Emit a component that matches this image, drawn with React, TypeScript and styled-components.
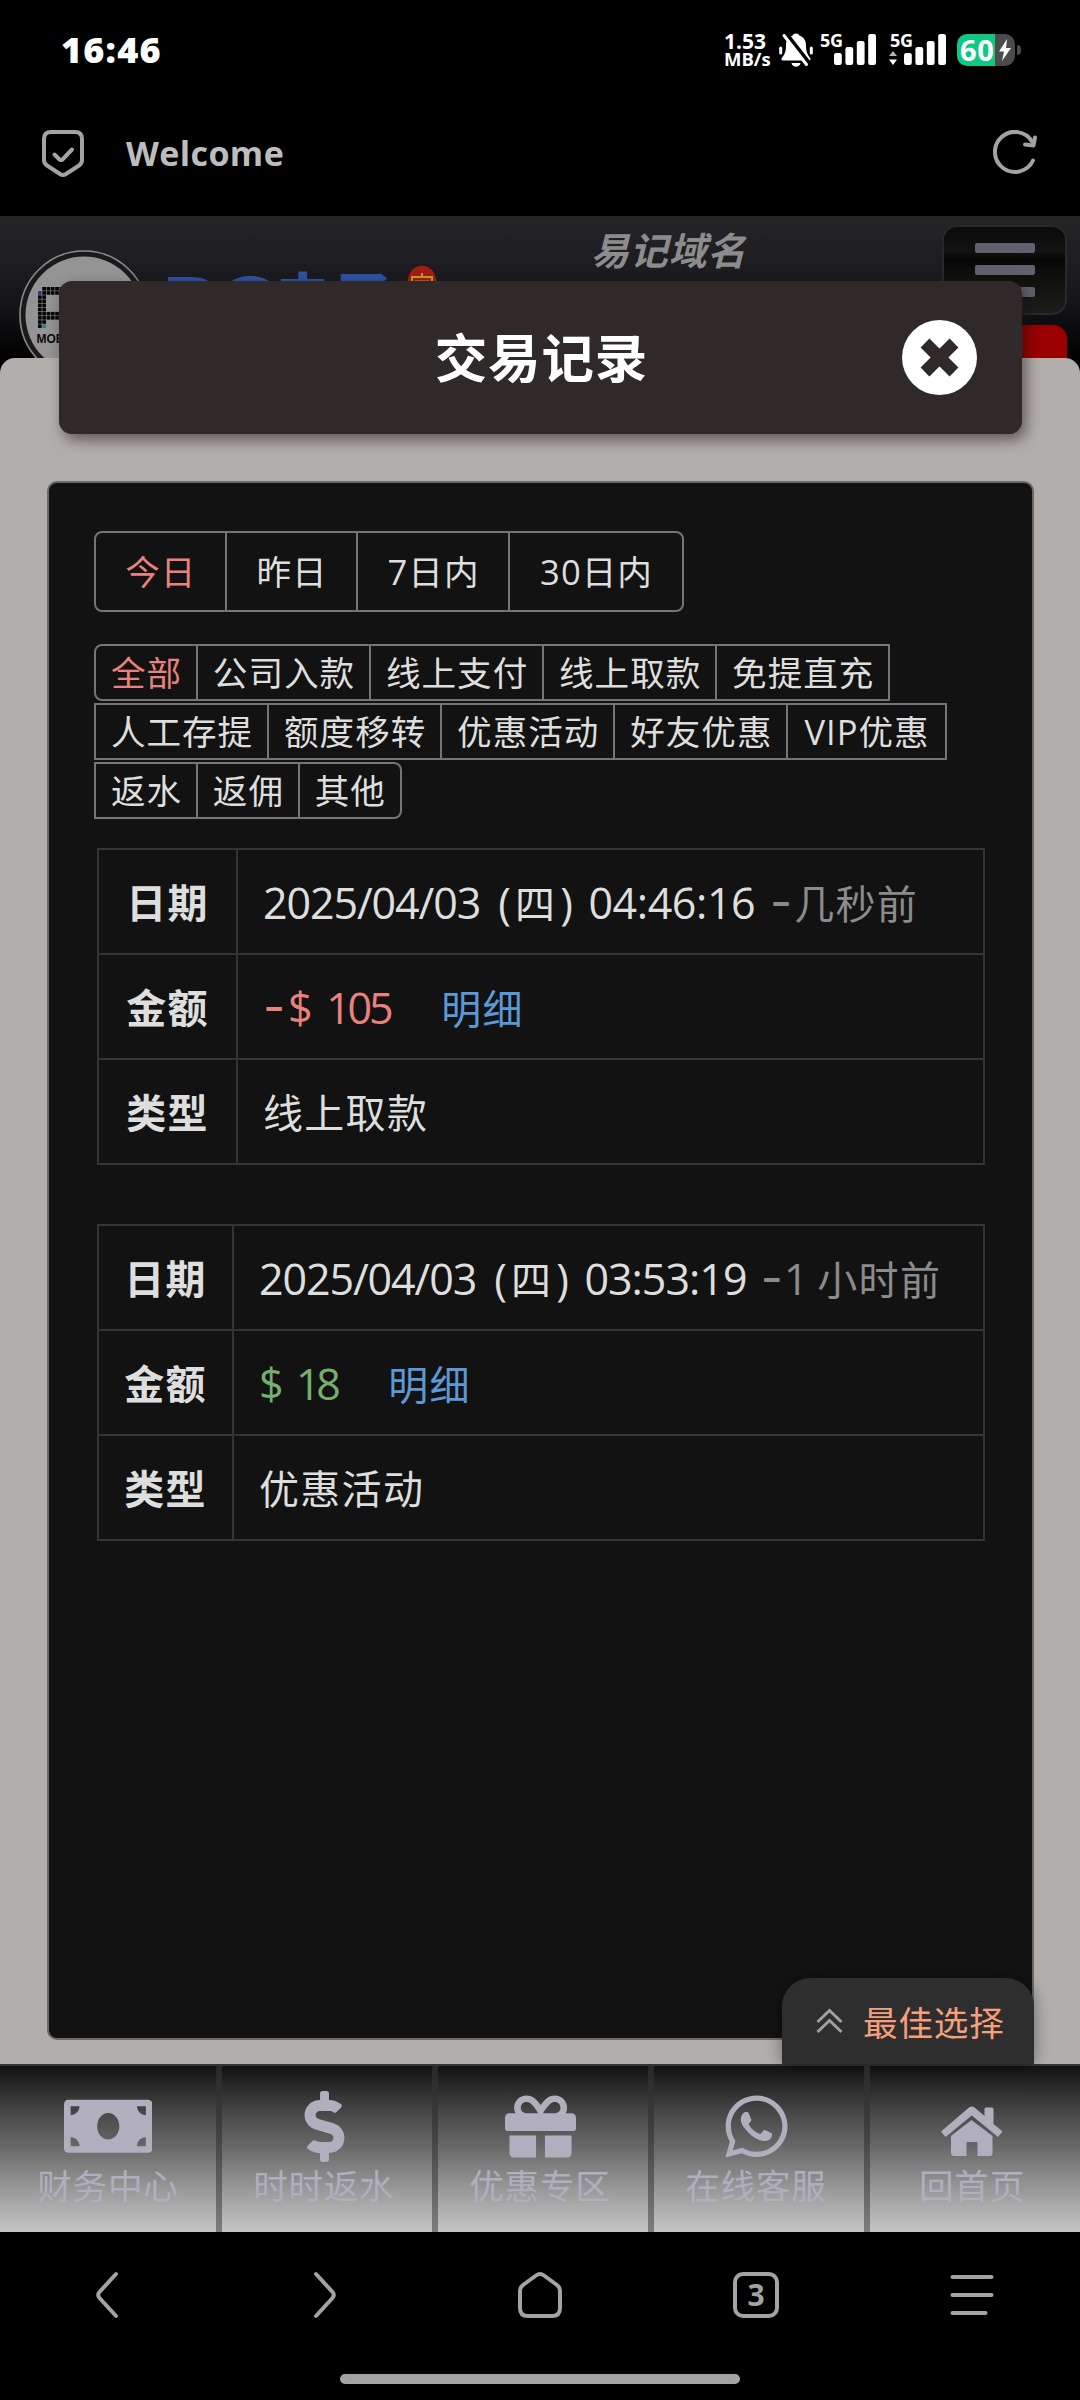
import React from "react";
import styled, { createGlobalStyle } from "styled-components";
import { FaMoneyBill, FaDollarSign, FaGift, FaWhatsapp } from "react-icons/fa";

const sans = `"Open Sans", "Noto Sans CJK SC", sans-serif`;

const Global = createGlobalStyle`
  * { box-sizing: border-box; }
  body { margin: 0; background: #000; font-family: ${sans}; }
  svg { display: block; flex: none; }
`;

const Screen = styled.div`
  width: 1080px;
  height: 2400px;
  display: flex;
  flex-direction: column;
  background: #000;
  overflow: hidden;
`;

/* ---------- system status ---------- */
const StatusBar = styled.header`
  height: 100px;
  padding: 0 59px 0 61px;
  display: flex;
  justify-content: space-between;
  align-items: center;
  color: #fff;
  font-weight: 700;
`;
const Clock = styled.span`
  font-size: 36px;
  line-height: 40px;
  letter-spacing: 1.2px;
  font-weight: 800;
`;
const StatusIcons = styled.div`
  display: flex;
  align-items: center;
  height: 34px;
`;
const Speed = styled.div`
  width: 55px;
  display: flex;
  flex-direction: column;
  font-size: 21px;
  line-height: 18px;
  white-space: nowrap;
`;
const SpeedUnit = styled.span`
  font-size: 18.5px;
`;
const Signal = styled.div<{ $w: number }>`
  position: relative;
  width: ${(p) => p.$w}px;
  height: 32px;
`;
const Generation = styled.span`
  position: absolute;
  left: 0;
  top: -4px;
  font-size: 18px;
  line-height: 20px;
  letter-spacing: -0.3px;
`;
const BarsLayer = styled.div`
  position: absolute;
  left: 0;
  top: 0;
`;
const ArrowsLayer = styled.div`
  position: absolute;
  left: -1px;
  top: 16px;
`;
const Battery = styled.div`
  display: flex;
  align-items: center;
  gap: 2px;
`;
const BatteryBody = styled.div`
  width: 58px;
  height: 32px;
  border-radius: 10px;
  display: flex;
  align-items: center;
  padding-left: 3px;
  background: linear-gradient(90deg, #0fc982 38px, #4b4b4b 38px);
`;
const BatteryLevel = styled.span`
  width: 38px;
  font-size: 29px;
  line-height: 32px;
  letter-spacing: 0.6px;
`;
const BatteryTip = styled.div`
  width: 4px;
  height: 10px;
  border-radius: 0 5px 5px 0;
  background: #4b4b4b;
`;

/* ---------- browser title ---------- */
const AddressBar = styled.div`
  height: 116px;
  padding: 0 41px 10px 40px;
  display: flex;
  align-items: center;
`;
const PageTitle = styled.h1`
  margin: 0 auto 0 40px;
  font-size: 34px;
  line-height: 40px;
  font-weight: 700;
  letter-spacing: 0.4px;
  color: #bdbdbd;
`;

/* ---------- web page ---------- */
const Page = styled.main`
  height: 2016px;
  display: flex;
  flex-direction: column;
  background: #000;
`;
const SiteHeader = styled.div`
  height: 142px;
  flex: none;
  padding-left: 19px;
  padding-right: 13px;
  display: flex;
  align-items: flex-start;
  background: linear-gradient(#262629 0, #1a1a1f 60px, #141418 90px, #000 142px);
`;
const Badge = styled.div`
  margin-top: 34px;
  width: 130px;
  height: 130px;
`;
const Brand = styled.div`
  display: flex;
  margin: 49px 0 0 12px;
  width: 237px;
  font-weight: 900;
  font-family: "Noto Sans CJK SC", sans-serif;
  font-size: 56px;
  line-height: 60px;
  color: #2d52a4;
`;
const BrandGlyph = styled.span<{ $stretch?: number }>`
  width: 57px;
  white-space: nowrap;
  transform: scaleX(${(p) => p.$stretch ?? 1});
  transform-origin: left;
`;
const Seal = styled.div`
  margin: 49px 0 0 9px;
  width: 30px;
  height: 40px;
`;
const Domain = styled.div`
  margin: 12px 0 0 154px;
  width: 351px;
  font-size: 38px;
  line-height: 44px;
  letter-spacing: 0.8px;
  font-weight: 700;
  font-style: italic;
  color: #8c8c8c;
`;
const HeaderSide = styled.div`
  width: 125px;
  margin-top: 9px;
  display: flex;
  flex-direction: column;
  gap: 10px;
`;
const MenuButton = styled.button`
  height: 90px;
  padding: 16px 0 0 31px;
  border: 2px solid #29292c;
  border-radius: 15px;
  display: flex;
  flex-direction: column;
  gap: 12px;
  background: linear-gradient(#0b0b0b 0, #121211 28%, #050505 40%, #0d0d0c 50%, #1c1c1b 100%);
`;
const MenuLine = styled.span`
  width: 60px;
  height: 10px;
  flex: none;
  border-radius: 2px;
  background: #62606c;
`;
const RedTab = styled.div`
  height: 34px;
  border-radius: 14px 14px 0 0;
  background: #9a0000;
`;

const Sheet = styled.section`
  position: relative;
  height: 1706px;
  flex: none;
  padding: 123px 46px 0 47px;
  border-radius: 15px 15px 0 0;
  background: #b2aeac;
`;
const DialogTitle = styled.div`
  position: absolute;
  left: 59px;
  top: -77px;
  width: 963px;
  height: 153px;
  border-radius: 13px;
  display: flex;
  align-items: center;
  justify-content: flex-end;
  padding-right: 45px;
  background: #2f2929;
  box-shadow: 4px 6px 14px rgba(30, 20, 20, 0.55);
`;
const DialogName = styled.h2`
  margin: 0 254px 0 0;
  font-size: 52.5px;
  line-height: 60px;
  letter-spacing: 0.8px;
  font-weight: 700;
  color: #fff;
`;
const Panel = styled.div`
  height: 1559px;
  padding: 48px 45px 0;
  border: 2px solid #6b6a68;
  border-radius: 10px;
  background: #121212;
`;

const FilterLine = styled.div<{ $top: number }>`
  display: flex;
  margin-top: ${(p) => p.$top}px;
`;
const Chip = styled.button<{ $h: number; $pad: number; $on?: boolean; $tl?: number; $tr?: number; $bl?: number; $br?: number }>`
  height: ${(p) => p.$h}px;
  padding: 0 ${(p) => p.$pad - 0.5}px 0 ${(p) => p.$pad + 0.5}px;
  border: 2px solid #757575;
  border-radius: ${(p) => `${p.$tl ?? 0}px ${p.$tr ?? 0}px ${p.$br ?? 0}px ${p.$bl ?? 0}px`};
  background: none;
  font-family: ${sans};
  font-size: 34.6px;
  line-height: 50px;
  letter-spacing: 1px;
  white-space: nowrap;
  color: ${(p) => (p.$on ? "#e8827b" : "#dedede")};
  & + & { margin-left: -2px; }
`;

const Record = styled.table<{ $top: number }>`
  margin: ${(p) => p.$top}px 0 0 3px;
  width: 888px;
  table-layout: fixed;
  border-collapse: collapse;
  font-size: 40px;
  line-height: 52px;
  letter-spacing: 1.3px;
  color: #dedede;
  white-space: nowrap;
`;
const Label = styled.th<{ $w: number }>`
  width: ${(p) => p.$w}px;
  height: 105px;
  padding: 3px 0 0;
  border: 2px solid #343434;
  font-weight: 700;
`;
const Value = styled.td`
  height: 105px;
  padding: 3px 0 0 25px;
  border: 2px solid #343434;
`;
const Num = styled.span<{ $c?: string; $ml?: number; $ls?: number }>`
  font-size: 43px;
  letter-spacing: ${(p) => p.$ls ?? -1.1}px;
  margin-left: ${(p) => p.$ml ?? 0}px;
  color: ${(p) => p.$c ?? "inherit"};
`;
const Dash = styled.span<{ $c: string; $ml?: number; $mr?: number }>`
  font-family: Inter, sans-serif;
  font-size: 48px;
  letter-spacing: 0;
  line-height: 40px;
  margin-left: ${(p) => p.$ml ?? 0}px;
  margin-right: ${(p) => p.$mr ?? 0}px;
  color: ${(p) => p.$c};
`;
const Ago = styled.span`
  color: #8b8b8b;
`;
const Weekday = styled.span`
  margin: 0 4px 0 5px;
`;
const Detail = styled.a<{ $ml: number }>`
  margin-left: ${(p) => p.$ml}px;
  color: #5b99d6;
`;

const BestChoice = styled.button`
  position: absolute;
  right: 46px;
  bottom: 0;
  width: 252px;
  height: 86px;
  padding: 0 0 0 34px;
  border: 0;
  border-radius: 28px 28px 0 0;
  display: flex;
  align-items: center;
  gap: 20px;
  background: #2e2e2e;
  box-shadow: 0 0 16px rgba(0, 0, 0, 0.4);
  font-family: ${sans};
  font-size: 34.6px;
  letter-spacing: 0.8px;
  white-space: nowrap;
  color: #f79f7b;
`;

/* ---------- site tab bar ---------- */
const TabBar = styled.nav`
  height: 168px;
  flex: none;
  display: grid;
  grid-template-columns: repeat(5, 216px);
  border-top: 2px solid #343434;
  background: linear-gradient(#121212, #474747 28%, #6b6b6b 50%, #9a9a9b 75%, #c6c6c8);
`;
const TabItem = styled.a`
  position: relative;
  display: flex;
  flex-direction: column;
  align-items: center;
  padding-top: 25px;
  font-size: 34.6px;
  line-height: 44px;
  letter-spacing: 0.8px;
  color: #b1aebe;
  & + &::before {
    content: "";
    position: absolute;
    left: 0;
    top: 0;
    bottom: 0;
    width: 6px;
    background: linear-gradient(#292929, #3c3c3c 35%, #555 60%, #7e7e7e);
  }
`;
const IconSlot = styled.div`
  height: 71px;
  margin-bottom: 2px;
  display: flex;
  align-items: center;
`;

/* ---------- browser tool bar ---------- */
const BrowserBar = styled.footer`
  height: 168px;
  display: flex;
  flex-direction: column;
  align-items: center;
`;
const Tools = styled.div`
  width: 1080px;
  height: 142px;
  padding-top: 38px;
  display: grid;
  grid-template-columns: repeat(5, 1fr);
  justify-items: center;
  align-items: start;
`;
const TabCount = styled.div`
  width: 46px;
  height: 46px;
  margin-top: 2px;
  border: 4px solid #a3a3a3;
  border-radius: 10px;
  font-size: 30px;
  line-height: 37px;
  font-weight: 700;
  text-align: center;
  color: #a3a3a3;
`;
const HomeIndicator = styled.div`
  width: 400px;
  height: 10px;
  border-radius: 5px;
  background: #a3a3a3;
`;

const line = { fill: "none", stroke: "#a3a3a3", strokeWidth: 4, strokeLinecap: "round" as const, strokeLinejoin: "round" as const };

function SignalBars({ arrows }: { arrows?: boolean }) {
  return (
    <BarsLayer>
      {arrows && (
        <ArrowsLayer>
          <svg width="8" height="16">
            <path d="M4 1L8 6H0z" fill="#b5b5b5" />
            <path d="M4 15L8 9.500H0z" fill="#fff" />
          </svg>
        </ArrowsLayer>
      )}
      <svg width="57" height="32" fill="#fff">
        {[19, 13, 7, 0].map((y, i) => (
          <rect key={y} x={14 + i * 11.4} y={y} width="7.800" height={31 - y} rx="2.200" />
        ))}
      </svg>
    </BarsLayer>
  );
}

const BellIcon = styled.svg`
  margin-right: 7px;
`;
const MutedBell = () => (
  <BellIcon width="34" height="34" viewBox="0 0 34 34">
    <path d="M17 0.500c1.700 0 2.800.8 3.400 2 4.300 1.600 6.600 5 6.600 9.500 0 6 .8 8.500 4.200 13 .8 1.200.2 2.500-1.200 2.500H4c-1.400 0-2-1.300-1.200-2.500C6.300 20.500 7 18 7 12c0-4.500 2.300-7.900 6.600-9.500.6-1.200 1.700-2 3.400-2z" fill="#fff" />
    <path d="M12.500 30h9c-.5 2.500-2.300 3.700-4.500 3.700s-4-1.200-4.500-3.700z" fill="#fff" />
    <path d="M1.700 15v5M32.300 15v5" stroke="#fff" strokeWidth="3" strokeLinecap="round" />
    <path d="M5.500 0L32 34" stroke="#000" strokeWidth="6" />
    <path d="M5 2.500L27.500 31.500" stroke="#fff" strokeWidth="3" strokeLinecap="round" />
  </BellIcon>
);

const cells: Array<[number, number, string?]> = [];
for (let r = 0; r < 10; r++) {
  for (let c = 0; c < 8; c++) {
    const solid = r < 2 || r === 6 || r === 7 ? true : c < 2;
    if (!solid || (r === 0 && c === 0)) continue;
    cells.push([c, r, r === 1 && c === 0 ? "#4a2a9a" : r === 9 && c === 1 ? "#26807c" : undefined]);
  }
}

const RoundLogo = () => (
  <svg width="130" height="130">
    <circle cx="65" cy="65" r="64" fill="#1a1a1c" stroke="#8a8a8a" strokeWidth="1.600" />
    <circle cx="65" cy="65" r="58.500" fill="#949494" />
    {cells.map(([c, r, f]) => (
      <rect key={`${c}-${r}`} x={19 + c * 4.3} y={37 + r * 4.15} width="3.700" height="3.600" fill={f ?? "#050505"} />
    ))}
    <text x="17.500" y="93" fontFamily="Liberation Sans" fontWeight="700" fontSize="12" fill="#0a0a0a">MOBILE</text>
  </svg>
);

const dateTabs = ["今日", "昨日", "7日内", "30日内"];
const datePads = [28.8, 29.2, 28.8, 29.8];
const kinds = [
  ["全部", "公司入款", "线上支付", "线上取款", "免提直充"],
  ["人工存提", "额度移转", "优惠活动", "好友优惠", "VIP优惠"],
  ["返水", "返佣", "其他"],
];
const red = "#e8827b";
const green = "#74b06d";
const grey = "#8b8b8b";

export default function App() {
  return (
    <Screen>
      <Global />
      <StatusBar>
        <Clock>16:46</Clock>
        <StatusIcons>
          <Speed>
            <span>1.53</span>
            <SpeedUnit>MB/s</SpeedUnit>
          </Speed>
          <MutedBell />
          <Signal $w={70}>
            <Generation>5G</Generation>
            <SignalBars />
          </Signal>
          <Signal $w={67}>
            <Generation>5G</Generation>
            <SignalBars arrows />
          </Signal>
          <Battery>
            <BatteryBody>
              <BatteryLevel>60</BatteryLevel>
              <svg width="14" height="22" viewBox="0 0 14 22" fill="#fff">
                <path d="M9 0L1 12.500h5L4 22l9-13H8z" />
              </svg>
            </BatteryBody>
            <BatteryTip />
          </Battery>
        </StatusIcons>
      </StatusBar>

      <AddressBar>
        <svg width="46" height="50" viewBox="0 0 46 50" {...line}>
          <path d="M11 4H35Q42 4 42 11V32Q42 35.500 39 37.500L26 46Q23 48 20 46L7 37.500Q4 35.500 4 32V11Q4 4 11 4z" />
          <path d="M14.500 26.500L19.500 31.500Q21 32.500 22.500 31.500L32 21.500" />
        </svg>
        <PageTitle>Welcome</PageTitle>
        <svg width="46" height="46" viewBox="0 0 46 46" {...line}>
          <path d="M40 30.500A20 20 0 1 1 39 11.500" />
          <path d="M42 7.500L40.500 15.500L32 14.500" />
        </svg>
      </AddressBar>

      <Page>
        <SiteHeader>
          <Badge><RoundLogo /></Badge>
          <Brand>
            <BrandGlyph $stretch={1.45}>P</BrandGlyph>
            <BrandGlyph $stretch={1.4}>G</BrandGlyph>
            <BrandGlyph>电</BrandGlyph>
            <BrandGlyph $stretch={1.1}>子</BrandGlyph>
          </Brand>
          <Seal>
            <svg width="30" height="40">
              <path d="M0 20Q1 6 9 2Q15-1 21 2Q29 6 30 20V40H0z" fill="#a01d14" />
              <path d="M5 16V12H25V16M15 8V12M8 16.500H22" stroke="#c79a1c" strokeWidth="2" fill="none" />
            </svg>
          </Seal>
          <Domain>易记域名</Domain>
          <HeaderSide>
            <MenuButton><MenuLine /><MenuLine /><MenuLine /></MenuButton>
            <RedTab />
          </HeaderSide>
        </SiteHeader>

        <Sheet>
          <Panel>
            <FilterLine $top={0}>
              {dateTabs.map((t, i) => (
                <Chip key={t} $h={81} $pad={datePads[i]} $on={i === 0}
                  $tl={i === 0 ? 8 : 0} $bl={i === 0 ? 8 : 0} $tr={i === 3 ? 8 : 0} $br={i === 3 ? 8 : 0}>{t}</Chip>
              ))}
            </FilterLine>
            {kinds.map((row, r) => (
              <FilterLine key={r} $top={r === 0 ? 32 : 2}>
                {row.map((t, i) => (
                  <Chip key={t} $h={57} $pad={t.length === 5 ? 15.6 : 14.4} $on={r === 0 && i === 0}
                    $tl={r === 0 && i === 0 ? 8 : 0} $bl={r === 0 && i === 0 ? 8 : 0}
                    $tr={r === 2 && i === 2 ? 8 : 0} $br={r === 2 && i === 2 ? 8 : 0}>{t}</Chip>
                ))}
              </FilterLine>
            ))}

            <Record $top={29}>
              <tbody>
                <tr>
                  <Label $w={139}>日期</Label>
                  <Value>
                    <Num>2025/04/03 </Num><Num $ml={8}>(</Num><Weekday>四</Weekday><Num>) </Num>
                    <Num $ml={6.5} $ls={-0.4}>04:46:16 </Num>
                    <Dash $c={grey} $ml={4} $mr={2}>-</Dash><Ago>几秒前</Ago>
                  </Value>
                </tr>
                <tr>
                  <Label $w={139}>金额</Label>
                  <Value>
                    <Dash $c={red} $mr={3}>-</Dash><Num $c={red}>$ </Num><Num $c={red} $ml={4.5} $ls={-3.2}>105</Num>
                    <Detail $ml={51}>明细</Detail>
                  </Value>
                </tr>
                <tr><Label $w={139}>类型</Label><Value>线上取款</Value></tr>
              </tbody>
            </Record>

            <Record $top={59}>
              <tbody>
                <tr>
                  <Label $w={135}>日期</Label>
                  <Value>
                    <Num>2025/04/03 </Num><Num $ml={8}>(</Num><Weekday>四</Weekday><Num>) </Num>
                    <Num $ml={6.5} $ls={-1}>03:53:19 </Num>
                    <Dash $c={grey} $ml={4} $mr={1}>-</Dash><Num $c={grey}>1 </Num><Ago>小时前</Ago>
                  </Value>
                </tr>
                <tr>
                  <Label $w={135}>金额</Label>
                  <Value>
                    <Num $c={green}>$ </Num><Num $c={green} $ml={3.5} $ls={-4.5}>18</Num>
                    <Detail $ml={52}>明细</Detail>
                  </Value>
                </tr>
                <tr><Label $w={135}>类型</Label><Value>优惠活动</Value></tr>
              </tbody>
            </Record>
          </Panel>

          <DialogTitle>
            <DialogName>交易记录</DialogName>
            <svg width="75" height="75" viewBox="-37.500 -37.500 75 75">
              <circle r="37.500" fill="#fff" />
              <path d="M-14.500-14.500L14.500 14.500M14.500-14.500L-14.500 14.500" stroke="#2f2929" strokeWidth="12.500" />
            </svg>
          </DialogTitle>

          <BestChoice>
            <svg width="27" height="26" viewBox="0 0 27 26" fill="none" stroke="#a0a0a0" strokeWidth="3">
              <path d="M1.500 14L13.500 2.500L25.500 14M1.500 24L13.500 12.500L25.500 24" />
            </svg>
            最佳选择
          </BestChoice>
        </Sheet>

        <TabBar>
          <TabItem><IconSlot><FaMoneyBill size={88.5} /></IconSlot>财务中心</TabItem>
          <TabItem><IconSlot><FaDollarSign size={71} /></IconSlot>时时返水</TabItem>
          <TabItem><IconSlot><FaGift size={71} /></IconSlot>优惠专区</TabItem>
          <TabItem><IconSlot><FaWhatsapp size={71} /></IconSlot>在线客服</TabItem>
          <TabItem>
            <IconSlot>
              <svg width="62" height="60" viewBox="0 0 62 60" fill="currentColor">
                <path d="M30.500 23L10 39V56Q10 59 13 59H25.500V45H36.500V59H49Q51.500 59 51.500 56V39z" />
                <path d="M1.500 36.500L0 34.500L28 10.500Q30.800 8.500 33.500 10.500L43.500 19V12Q43.500 10.500 45 10.500H51Q52.500 10.500 52.500 12V27L61.500 34.500L57 40L30.800 18.500L4.500 40z" />
              </svg>
            </IconSlot>
            回首页
          </TabItem>
        </TabBar>
      </Page>

      <BrowserBar>
        <Tools>
          <svg width="50" height="50" viewBox="0 0 50 50" {...line}><path d="M33 4L16.500 22Q14 25 16.500 28L33 46" /></svg>
          <svg width="50" height="50" viewBox="0 0 50 50" {...line}><path d="M17 4L33.500 22Q36 25 33.500 28L17 46" /></svg>
          <svg width="50" height="50" viewBox="0 0 50 50" {...line}>
            <path d="M21 5.500Q25 2.500 29 5.500L42 15Q45 17.500 45 21V38Q45 46 37 46H13Q5 46 5 38V21Q5 17.500 8 15z" />
          </svg>
          <TabCount>3</TabCount>
          <svg width="50" height="50" viewBox="0 0 50 50" {...line}><path d="M5.500 7H44.500M5.500 25H44.500M5.500 43H38.500" /></svg>
        </Tools>
        <HomeIndicator />
      </BrowserBar>
    </Screen>
  );
}
